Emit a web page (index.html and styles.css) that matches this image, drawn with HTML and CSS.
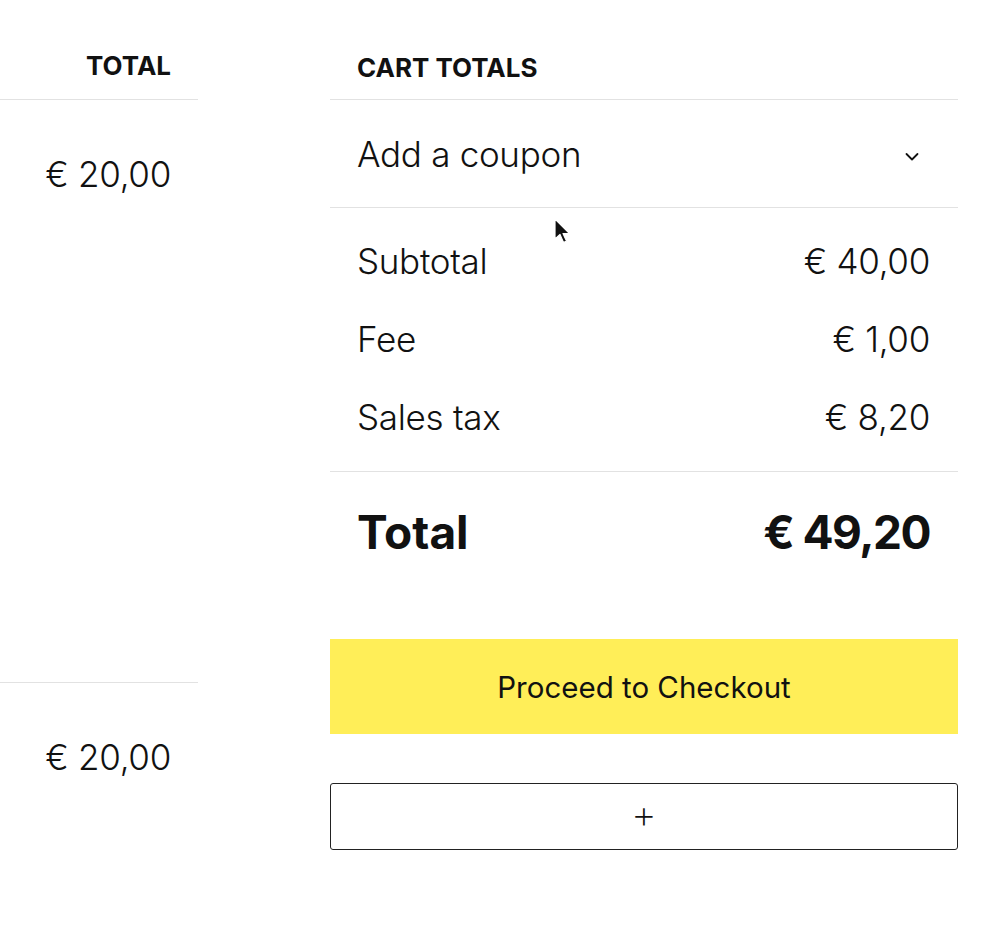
FILE: index.html
```html
<!DOCTYPE html>
<html lang="en">
  <head>
    <meta charset="UTF-8" />
    <meta name="viewport" content="width=device-width, initial-scale=1.0" />
    <title>Cart</title>
    <link rel="stylesheet" href="styles.css">
  </head>
  <body>
    <div class="page">
      <div class="items">
        <div class="items-head">TOTAL</div>
        <div class="item-row">€ 20,00</div>
        <div class="item-row last">€ 20,00</div>
      </div>

      <div class="totals">
        <h2 class="totals-title">CART TOTALS</h2>

        <div class="coupon">
          <span>Add a coupon</span>
          <svg class="chevron" width="16" height="10" viewBox="0 0 16 10">
            <path d="M2.5 2 L8 7.5 L13.5 2" fill="none" stroke="#111" stroke-width="1.8" stroke-linecap="round" stroke-linejoin="round" />
          </svg>
        </div>

        <div class="lines">
          <div class="line"><span>Subtotal</span><span>€ 40,00</span></div>
          <div class="line"><span>Fee</span><span>€ 1,00</span></div>
          <div class="line"><span>Sales tax</span><span>€ 8,20</span></div>
        </div>

        <div class="grand">
          <span>Total</span>
          <span class="grand-value">€ 49,20</span>
        </div>

        <button class="checkout-btn">Proceed to Checkout</button>
        <button class="add-btn">+</button>

        <!-- mouse pointer captured in the screenshot -->
        <svg class="cursor" width="18" height="28" viewBox="0 0 18 28">
          <path d="M1 1 L1 21 L6 16.5 L9.5 24.5 L12.5 23 L9 15.5 L15.5 15.5 Z" fill="#111" stroke="#fff" stroke-width="1.2" stroke-linejoin="round" />
        </svg>
      </div>
    </div>
  </body>
</html>
```

FILE: styles.css
```css
body {
  font-family: Inter, "Noto Sans", sans-serif;
  background: #fff;
  color: #111;
  margin: 0;
}

.page {
  display: flex;
  gap: 132px;
  align-items: flex-start;
}

.items {
  width: 198px;
  flex-shrink: 0;
}

.items-head {
  height: 100px;
  box-sizing: border-box;
  padding: 50px 27px 0 0;
  text-align: right;
  font-size: 26px;
  font-weight: 700;
  border-bottom: 1px solid #e2e2e2;
}

.item-row {
  height: 582px;
  box-sizing: border-box;
  padding: 53px 27px 0 0;
  text-align: right;
  font-size: 35px;
  font-weight: 300;
  letter-spacing: -0.3px;
}

.item-row.last {
  height: 200px;
  border-top: 1px solid #e2e2e2;
}

.totals {
  position: relative;
  width: 628px;
  flex-shrink: 0;
}

.totals-title {
  margin: 0;
  height: 100px;
  box-sizing: border-box;
  padding: 52px 27px 0;
  font-size: 26px;
  font-weight: 700;
  border-bottom: 1px solid #e2e2e2;
}

.coupon {
  display: flex;
  justify-content: space-between;
  align-items: center;
  height: 107px;
  padding: 0 38px 0 27px;
  font-size: 35px;
  font-weight: 300;
  letter-spacing: -0.3px;
  border-bottom: 1px solid #e2e2e2;
}

.chevron {
  margin-top: 6px;
}

.lines {
  display: flex;
  flex-direction: column;
  gap: 38px;
  padding: 33px 28px 34px 27px;
  border-bottom: 1px solid #e2e2e2;
}

.line {
  display: flex;
  justify-content: space-between;
  font-size: 35px;
  font-weight: 300;
  line-height: 40px;
  letter-spacing: -0.3px;
}

.grand {
  display: flex;
  justify-content: space-between;
  padding: 32px 28px 0 27px;
  font-size: 46px;
  font-weight: 700;
  line-height: 56px;
}

.grand-value {
  letter-spacing: -1.5px;
}

.checkout-btn {
  display: block;
  width: 100%;
  height: 95px;
  margin-top: 79px;
  background: #ffee58;
  border: none;
  font-family: inherit;
  font-size: 29.5px;
  color: #111;
  cursor: pointer;
}

.add-btn {
  display: block;
  width: 100%;
  height: 67px;
  margin-top: 49px;
  padding: 0 0 5px;
  background: #fff;
  border: 1.5px solid #222;
  border-radius: 3px;
  font-family: inherit;
  font-size: 40px;
  font-weight: 200;
  line-height: 1;
  color: #111;
  cursor: pointer;
}

.cursor {
  position: absolute;
  left: 224px;
  top: 218px;
}
```
